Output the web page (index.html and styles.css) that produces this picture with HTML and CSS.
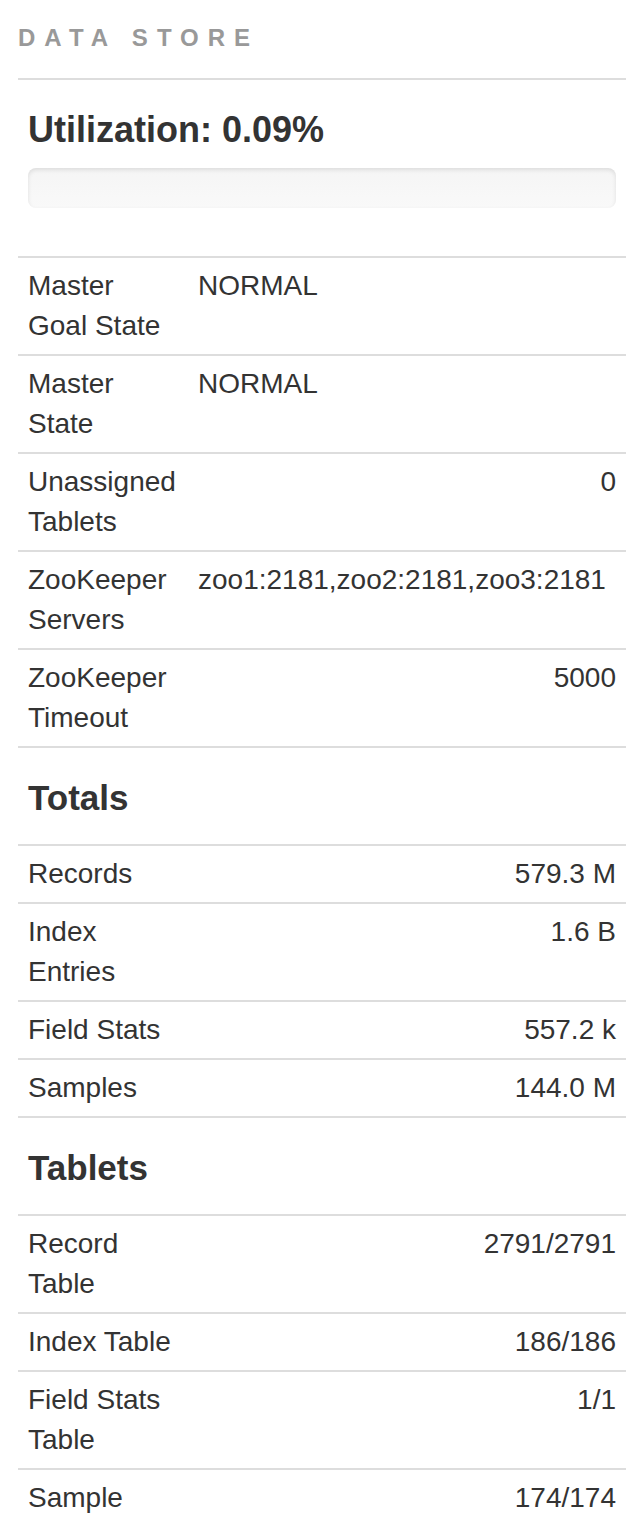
FILE: index.html
```html
<!DOCTYPE html>
<html>
<head>
<meta charset="utf-8">
<link rel="stylesheet" href="styles.css">
</head>
<body>
<div class="page">
  <div class="section-title">DATA STORE</div>
  <div class="block">
    <h4 class="heading first">Utilization: 0.09%</h4>
    <div class="progress"></div>
  </div>
  <table class="stats">
    <tr><td class="label">Master Goal State</td><td>NORMAL</td></tr>
    <tr><td class="label">Master State</td><td>NORMAL</td></tr>
    <tr><td class="label">Unassigned Tablets</td><td class="num">0</td></tr>
    <tr><td class="label">ZooKeeper Servers</td><td>zoo1:2181,zoo2:2181,zoo3:2181</td></tr>
    <tr><td class="label">ZooKeeper Timeout</td><td class="num">5000</td></tr>
  </table>
  <h4 class="heading">Totals</h4>
  <table class="stats">
    <tr><td class="label">Records</td><td class="num">579.3 M</td></tr>
    <tr><td class="label">Index Entries</td><td class="num">1.6 B</td></tr>
    <tr><td class="label">Field Stats</td><td class="num">557.2 k</td></tr>
    <tr><td class="label">Samples</td><td class="num">144.0 M</td></tr>
  </table>
  <h4 class="heading">Tablets</h4>
  <table class="stats">
    <tr><td class="label">Record Table</td><td class="num">2791/2791</td></tr>
    <tr><td class="label">Index Table</td><td class="num">186/186</td></tr>
    <tr><td class="label">Field Stats Table</td><td class="num">1/1</td></tr>
    <tr><td class="label">Sample</td><td class="num">174/174</td></tr>
  </table>
</div>
</body>
</html>
```
FILE: styles.css
```css
html, body {
  margin: 0;
  padding: 0;
  background: #fff;
}
body {
  font-family: "Liberation Sans", Arial, Helvetica, sans-serif;
  color: #333;
  font-size: 28px;
  line-height: 40px;
}
.page {
  padding: 0 18px;
}
.section-title {
  padding-top: 24px;
  padding-bottom: 26px;
  font-size: 24px;
  line-height: 28px;
  font-weight: bold;
  letter-spacing: 9px;
  color: #999;
  border-bottom: 2px solid #ddd;
}
.block {
  padding: 0 10px;
}
.heading {
  margin: 30px 0 26px;
  padding: 0 10px;
  font-size: 35px;
  line-height: 40px;
  font-weight: bold;
  color: #333;
}
.heading.first {
  padding: 0;
  margin: 30px 0 18px;
  font-size: 36px;
}
.progress {
  height: 40px;
  margin-bottom: 48px;
  border-radius: 8px;
  background: linear-gradient(to bottom, #f5f5f5, #f9f9f9);
  box-shadow: inset 0 2px 4px rgba(0, 0, 0, 0.1);
}
.stats {
  width: 100%;
  border-collapse: collapse;
  border-bottom: 2px solid #ddd;
}
.stats td {
  border-top: 2px solid #ddd;
  padding: 8px 10px;
  line-height: 40px;
  vertical-align: top;
  text-align: left;
}
.stats td.label {
  width: 150px;
}
.stats td.num {
  text-align: right;
}
```
